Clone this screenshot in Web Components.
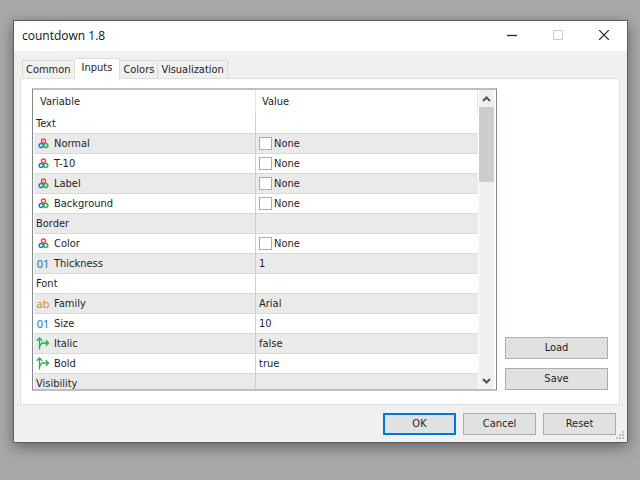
<!DOCTYPE html>
<html lang="en">
<head>
<meta charset="utf-8">
<title>countdown 1.8</title>
<style>
html { min-height: 100%; background: #a9a9a9; }
body { margin: 0; padding: 20px 12px 36px 13px; font: 11px/20px "DejaVu Sans Condensed", "Noto Sans", sans-serif; color: #1e1e28; }
</style>
</head>
<body>
<app-dialog heading="countdown 1.8">
  <tab-strip slot="tabs" labels="Common,Inputs,Colors,Visualization" selected="Inputs"></tab-strip>
  <inputs-list></inputs-list>
  <push-button slot="side">Load</push-button>
  <push-button slot="side">Save</push-button>
  <push-button slot="actions" default>OK</push-button>
  <push-button slot="actions">Cancel</push-button>
  <push-button slot="actions">Reset</push-button>
</app-dialog>
<script>
class BaseElement extends HTMLElement {
  connectedCallback() {
    if (!this.shadowRoot) this.attachShadow({ mode: 'open' }).innerHTML =
      '<style>*{box-sizing:border-box}button{font:inherit;color:inherit;margin:0;padding:0;border:0;background:none}svg{display:block}</style>' + this.render();
  }
}

customElements.define('app-dialog', class extends BaseElement {
  render() {
    return `<style>
      :host { display: block; position: relative; border: 1px solid #5e5e5e; background: #f0f0f0; box-shadow: 0 4px 14px rgba(0,0,0,.42); }
      header { display: flex; align-items: flex-start; height: 30px; padding-left: 8px; background: #fff; }
      h1 { flex: 1; margin: 0; font: 12px/30px "Open Sans", "Noto Sans", sans-serif; color: #111; }
      .win { width: 46px; height: 28px; display: grid; place-items: center; }
      .body { padding: 7px 7px 0 6px; }
      .page { display: flex; gap: 8px; border: 1px solid #dfdfdf; background: #fff; padding: 9px 11px 13px 11px; }
      .list { flex: 1; min-width: 0; }
      .side { display: flex; flex-direction: column; justify-content: flex-end; gap: 9px; width: 103px; padding-bottom: 1px; }
      footer { display: flex; justify-content: flex-end; padding: 8px 11px 7px; }
      .actions { display: grid; grid-auto-flow: column; grid-auto-columns: 73px; gap: 7px; }
      .grip { position: absolute; right: 2px; bottom: 2px; }
    </style>
    <header><h1>${this.getAttribute('heading')}</h1>
      <button class="win" aria-label="Minimize"><svg width="10" height="10"><path d="M0 5.5h10" stroke="#333" stroke-width="1.4"/></svg></button>
      <button class="win" aria-label="Maximize" disabled><svg width="10" height="10"><path d="M.5.5h9v9h-9z" fill="none" stroke="#ccc"/></svg></button>
      <button class="win" aria-label="Close"><svg width="10" height="10"><path d="M0 0l10 10m0-10l-10 10" stroke="#222" stroke-width="1.2"/></svg></button>
    </header>
    <div class="body"><slot name="tabs"></slot>
      <section class="page"><div class="list"><slot></slot></div><div class="side"><slot name="side"></slot></div></section>
    </div>
    <footer><div class="actions"><slot name="actions"></slot></div></footer>
    <svg class="grip" width="9" height="9" fill="#bdbdbd"><path d="M6 0h2v2H6zM3 3h2v2H3zM6 3h2v2H6zM0 6h2v2H0zM3 6h2v2H3zM6 6h2v2H6z"/></svg>`;
  }
});

customElements.define('tab-strip', class extends BaseElement {
  render() {
    const selected = this.getAttribute('selected');
    const tabs = this.getAttribute('labels').split(',').map(t =>
      `<button role="tab" aria-selected="${t === selected}">${t}</button>`).join('');
    return `<style>
      :host { display: block; }
      div { display: flex; align-items: flex-end; padding-left: 2px; }
      button { height: 18px; padding: 0 3px; line-height: 18px; border: 1px solid #dcdcdc; border-bottom: 0; border-left: 0; background: #f0f0f0; }
      button:first-child { border-left: 1px solid #dcdcdc; }
      button[aria-selected=true] { position: relative; height: 21px; margin-bottom: -1px; padding: 0 7px 2px; background: #fff; }
    </style><div role="tablist">${tabs}</div>`;
  }
});

customElements.define('push-button', class extends BaseElement {
  render() {
    return `<style>
      :host { display: block; }
      button { width: 100%; height: 22px; line-height: 20px; border: 1px solid #adadad; background: #e1e1e1; }
      :host([default]) button { border: 2px solid #0078d7; line-height: 18px; }
    </style><button type="button"><slot></slot></button>`;
  }
});

const icons = {
  color: '<svg width="11" height="11" fill="none" stroke-width="1.5"><circle cx="5.5" cy="3" r="2" stroke="#dc5350"/><circle cx="3.2" cy="7.4" r="2" stroke="#2478be"/><circle cx="7.8" cy="7.4" r="2" stroke="#28b446"/></svg>',
  flag: '<svg width="14" height="13" fill="none" stroke="#22b14c" stroke-width="1.3"><path d="M3.5 12.5V1M.8 3.7L3.5 1l2.7 2.7M3.5 11Q4 6 7.5 6H12.5M9.8 3.3L12.5 6 9.8 8.7"/></svg>',
  int: '<span style="color:#2478b0">01</span>',
  str: '<span style="color:#cf8f22">ab</span>'
};
const rows = [
  ['', 'Text'], ['color', 'Normal', 'None'], ['color', 'T-10', 'None'], ['color', 'Label', 'None'], ['color', 'Background', 'None'],
  ['', 'Border'], ['color', 'Color', 'None'], ['int', 'Thickness', '1'],
  ['', 'Font'], ['str', 'Family', 'Arial'], ['int', 'Size', '10'], ['flag', 'Italic', 'false'], ['flag', 'Bold', 'true'],
  ['', 'Visibility']
];

customElements.define('inputs-list', class extends BaseElement {
  render() {
    const body = rows.map(([icon, name, value = '']) => `<tr><td><div class="cell">${icon ? `<span class="icon">${icons[icon]}</span>` : ''}${name}</div></td>
      <td><div class="cell value">${icon === 'color' ? '<i class="swatch"></i>' : ''}${value}</div></td></tr>`).join('');
    return `<style>
      :host { display: flex; height: 299px; border: 1px solid #828790; border-top: 2px solid #b9c0c6; border-bottom: 2px solid #b9c0c6; background: #fff; }
      .view { flex: 1; min-width: 0; overflow: hidden; padding-left: 1px; }
      table { width: 100%; border-collapse: separate; border-spacing: 0; table-layout: fixed; }
      col:first-child { width: 222px; }
      th { height: 24px; padding: 0 6px; text-align: left; font-weight: 400; border-right: 1px solid #e4e4e4; }
      td { height: 20px; padding: 0; border-bottom: 1px solid #d9d9d9; }
      td:first-child { border-right: 1px solid #cfcfcf; }
      tr:nth-child(even) td { background: #eaeaea; }
      .cell { display: flex; align-items: center; height: 19px; padding-left: 2px; line-height: 18px; }
      .value { padding-left: 3px; }
      .icon { display: grid; justify-items: center; align-items: center; width: 14px; margin-right: 4px; height: 18px; }
      .icon span { font-family: "Noto Sans", sans-serif; }
      .swatch { width: 13px; height: 13px; margin-right: 2px; border: 1px solid #ababab; background: #fff; }
      .bar { display: flex; flex-direction: column; width: 15px; margin: 0 2px 0 1px; background: #f0f0f0; }
      .bar button { display: grid; place-items: center; height: 17px; }
      .thumb { height: 75px; background: #cdcdcd; }
      .rest { flex: 1; }
    </style>
    <div class="view"><table><colgroup><col><col></colgroup><thead><tr><th scope="col">Variable</th><th scope="col">Value</th></tr></thead><tbody>${body}</tbody></table></div>
    <div class="bar"><button aria-label="Scroll up"><svg width="9" height="6" fill="none" stroke="#505050" stroke-width="2"><path d="M1 5l3.5-3.5L8 5"/></svg></button><div class="thumb"></div><div class="rest"></div><button aria-label="Scroll down"><svg width="9" height="6" fill="none" stroke="#505050" stroke-width="2"><path d="M1 1l3.5 3.5L8 1"/></svg></button></div>`;
  }
});
</script>
</body>
</html>
